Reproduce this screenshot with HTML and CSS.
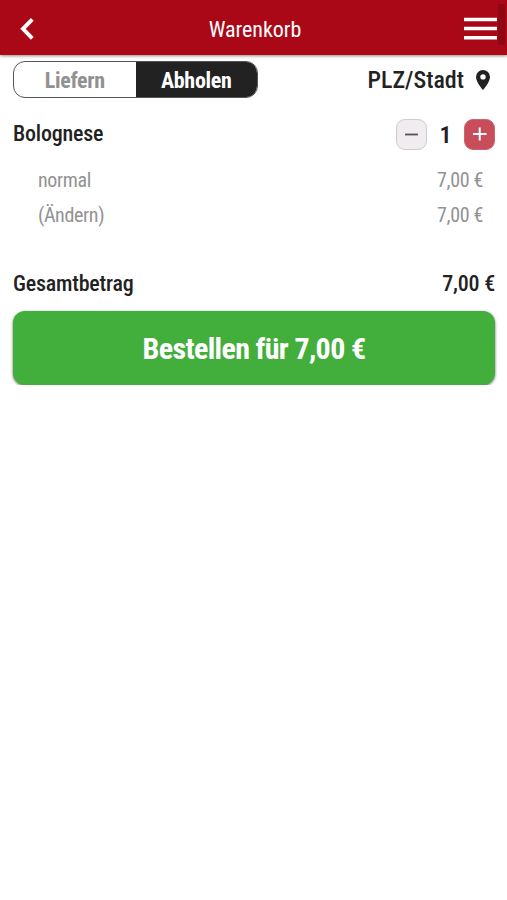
FILE: index.html
```html
<!DOCTYPE html>
<html lang="de">
<head>
<meta charset="utf-8">
<title>Warenkorb</title>
<link rel="stylesheet" href="styles.css">
</head>
<body>
<header class="bar">
  <svg class="back" width="16" height="24" viewBox="0 0 16 24"><path d="M13.300 2.300 4 11.800 13.300 21.300" fill="none" stroke="#fff" stroke-width="3.900"/></svg>
  <h1 class="title"><span class="t">Warenkorb</span></h1>
  <svg class="menu" width="33" height="24" viewBox="0 0 33 24"><path d="M0 2.500h33M0 11.500h33M0 20.700h33" stroke="#fff" stroke-width="3.600"/></svg>
  <i class="thumb"></i>
</header>
<main class="cart">
  <div class="mode">
    <div class="toggle"><span class="option"><span class="t">Liefern</span></span><span class="option active"><span class="t">Abholen</span></span></div>
    <div class="place"><span class="t">PLZ/Stadt</span><svg width="14" height="20" viewBox="0 0 14 20"><path fill="#222" fill-rule="evenodd" d="M7 0a7 7 0 0 0-7 7c0 5.200 7 13 7 13s7-7.800 7-13a7 7 0 0 0-7-7Zm0 9.600a2.700 2.700 0 1 1 0-5.400 2.700 2.700 0 0 1 0 5.400Z"/></svg></div>
  </div>
  <div class="item">
    <span class="t">Bolognese</span>
    <div class="stepper">
      <button class="step"><svg width="29" height="29" viewBox="0 0 29 29"><path d="M8 14.500h13" stroke="#555" stroke-width="1.800"/></svg></button>
      <span class="count">1</span>
      <button class="step plus"><svg width="29" height="29" viewBox="0 0 29 29"><path d="M8 14h13.500M14.700 7.500v13" stroke="#fff" stroke-width="2"/></svg></button>
    </div>
  </div>
  <div class="detail"><span class="t">normal</span><span class="t">7,00 €</span></div>
  <div class="detail"><span class="t">(Ändern)</span><span class="t">7,00 €</span></div>
  <div class="total"><span class="t">Gesamtbetrag</span><span class="t">7,00 €</span></div>
  <button class="order"><span class="t">Bestellen für 7,00 €</span></button>
</main>
</body>
</html>
```
FILE: styles.css
```css
* { box-sizing: border-box; }
body { margin: 0; background: #fff; color: #222; font-family: "Roboto Condensed", Roboto, sans-serif; font-stretch: 75%; }
svg { display: block; flex: none; }
button { border: 0; padding: 0; font: inherit; }
.t { display: block; white-space: nowrap; }
.bar { position: relative; height: 55px; padding: 3px 10px 0 19px; display: flex; align-items: center; justify-content: space-between; background: #aa0817; box-shadow: 0 1px 3px rgba(0,0,0,.45); }
.title { margin: 0 0 0 11px; font-size: 22px; font-weight: 400; color: #fff; line-height: 30px; padding-top: 1px; letter-spacing: -.05px; }
.thumb { position: absolute; right: 2px; top: 4px; width: 7px; height: 41px; background: #900714; }
.cart { padding: 6px 12px 0 13px; }
.mode { display: flex; justify-content: space-between; align-items: center; height: 37px; }
.toggle { display: flex; width: 245px; height: 37px; border: 1px solid #555; border-radius: 12px; overflow: hidden; font-size: 22px; font-weight: 700; letter-spacing: -.3px; }
.option { flex: 1; display: flex; align-items: center; justify-content: center; color: #919191; padding-top: 2px; }
.active { background: #222; color: #fff; }
.place { display: flex; align-items: center; gap: 12px; margin-right: 5px; font-size: 24px; font-weight: 500; }
.place .t { padding-top: 1px; }
.item { display: flex; justify-content: space-between; align-items: center; height: 31px; margin-top: 21px; font-size: 22px; font-weight: 500; letter-spacing: -.2px; }
.item > .t { padding-bottom: 2px; }
.stepper { display: flex; align-items: center; }
.step { width: 31px; height: 31px; border: 1px solid #cfcdcf; border-radius: 9px; background: #f0ecef; }
.plus { background: #c74d5b; border-color: #cf6470; }
.count { width: 37px; text-align: center; font-size: 24px; font-weight: 600; }
.detail { display: flex; justify-content: space-between; align-items: center; height: 35px; padding: 0 12px 0 25px; font-size: 20px; color: #929292; letter-spacing: -.35px; }
.item + .detail { margin-top: 12px; }
.total { display: flex; justify-content: space-between; align-items: center; height: 30px; margin-top: 36px; font-size: 22px; font-weight: 500; letter-spacing: -.2px; }
.order { display: flex; width: 482px; height: 74px; margin-top: 13px; border-radius: 12px; align-items: center; justify-content: center; padding-top: 1px; background: #42ae3c; color: #fff; font-size: 30px; font-weight: 700; letter-spacing: -.65px; box-shadow: 0 1px 3px rgba(0,0,0,.6); }
```
